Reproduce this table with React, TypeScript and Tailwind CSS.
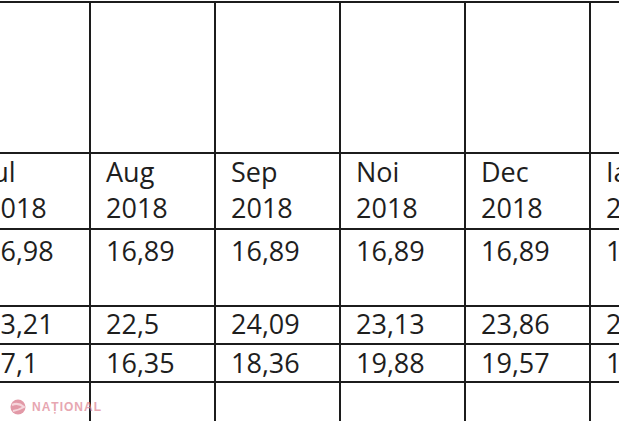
const columns = [
  { head: ['Jul', '2018'], a: '16,98', b: '23,21', c: '17,1' },
  { head: ['Aug', '2018'], a: '16,89', b: '22,5', c: '16,35' },
  { head: ['Sep', '2018'], a: '16,89', b: '24,09', c: '18,36' },
  { head: ['Noi', '2018'], a: '16,89', b: '23,13', c: '19,88' },
  { head: ['Dec', '2018'], a: '16,89', b: '23,86', c: '19,57' },
  { head: ['Ian', '2019'], a: '16,89', b: '24,15', c: '19,02' },
];

const cell = 'bg-white pl-[15px] text-[27px] leading-[33px] text-[#1e1e1e] whitespace-nowrap overflow-hidden';

export default function App() {
  return (
    <div
      className="relative w-[619px] h-[421px] overflow-hidden bg-white"
      style={{ fontFamily: '"Open Sans", "Liberation Sans", sans-serif' }}
    >
      <div className="mt-[1px] -ml-[30px] w-max pt-[2px] bg-[#1c1c1c]">
        <div className="grid grid-cols-[119px_123px_123px_123px_123px_123px] grid-rows-[149px_74px_75px_36px_36px_60px] gap-[2px]">
          {columns.map((c) => (
            <div key={c.head[0] + 'e'} className={cell} />
          ))}
          {columns.map((c) => (
            <div key={c.head[0] + 'h'} className={`${cell} leading-[36px]`}>
              {c.head[0]}
              <br />
              {c.head[1]}
            </div>
          ))}
          {columns.map((c) => (
            <div key={c.head[0] + 'a'} className={`${cell} pt-[4px]`}>
              {c.a}
            </div>
          ))}
          {columns.map((c) => (
            <div key={c.head[0] + 'b'} className={cell}>
              {c.b}
            </div>
          ))}
          {columns.map((c) => (
            <div key={c.head[0] + 'c'} className={`${cell} pt-[1px]`}>
              {c.c}
            </div>
          ))}
          {columns.map((c) => (
            <div key={c.head[0] + 'f'} className={cell} />
          ))}
        </div>
      </div>

      {/* watermark */}
      <div className="absolute left-[10px] top-[398px] flex items-center gap-[6px] opacity-75">
        <svg width="16" height="16" viewBox="0 0 16 16">
          <circle cx="8" cy="8" r="7.5" fill="#d9788a" />
          <path d="M2 6 Q8 3 14 8 Q9 11 3 12" fill="none" stroke="#f3c9d1" strokeWidth="2" />
        </svg>
        <span
          className="text-[12px] font-bold tracking-[1px] text-[#e08a98]"
          style={{ fontFamily: '"Liberation Sans", Arial, sans-serif' }}
        >
          NAȚIONAL
        </span>
      </div>
    </div>
  );
}
